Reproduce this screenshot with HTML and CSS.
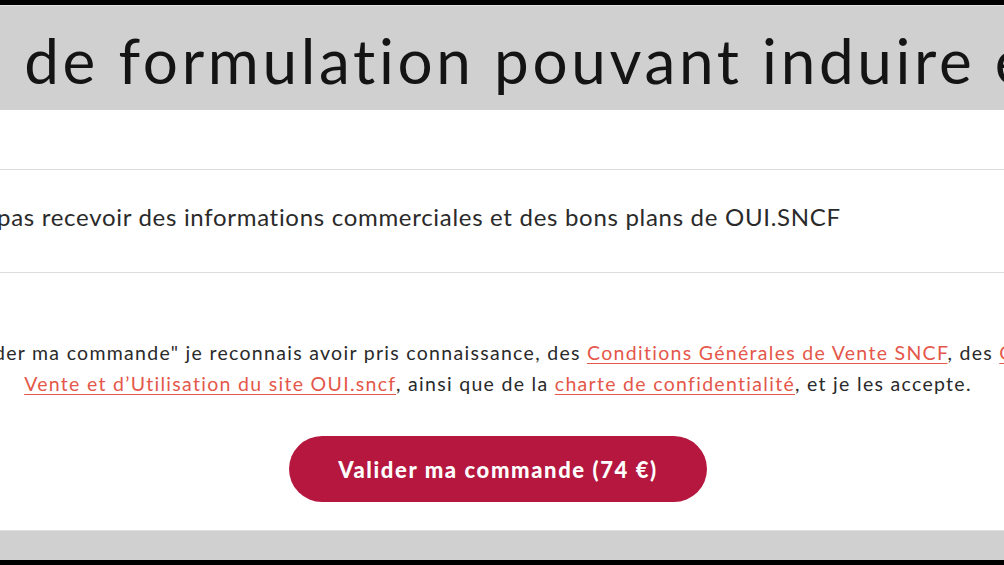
FILE: index.html
```html
<!DOCTYPE html>
<html lang="fr">
<head>
    <meta charset="UTF-8">
    <meta name="viewport" content="width=device-width, initial-scale=1.0">
    <title>OUI.sncf - Validation de la commande</title>
    <link rel="stylesheet" href="styles.css">
</head>
<body>
    <div class="page">
        <div class="banner">
            <h1 class="banner-title">Exemple de formulation pouvant induire en erreur</h1>
        </div>

        <div class="checkout">
            <div class="option-row">
                <label class="option-label">
                    Je ne souhaite pas recevoir des informations commerciales et des bons plans de OUI.SNCF
                </label>
            </div>

            <p class="legal">
                En cliquant sur "Valider ma commande" je reconnais avoir pris connaissance, des
                <a href="#">Conditions Générales de Vente SNCF</a>, des <a href="#">Conditions Générales de<br>Vente et d’Utilisation du site OUI.sncf</a>,
                ainsi que de la <a href="#">charte de confidentialité</a>, et je les accepte.
            </p>

            <div class="actions">
                <button class="submit-button">Valider ma commande (74 €)</button>
            </div>
        </div>

        <div class="banner-bottom"></div>
    </div>
</body>
</html>
```

FILE: styles.css
```css
* {
    margin: 0;
    padding: 0;
    box-sizing: border-box;
}

html,
body {
    height: 100%;
}

body {
    background-color: #000;
    font-family: Lato, "Open Sans", Arial, sans-serif;
    color: #2a2a2a;
    overflow: hidden;
    padding: 5px 0;
}

/* page is wider than the window, centred a little left of it */
.page {
    width: 1400px;
    margin-left: -202px;
    height: 100%;
    display: flex;
    flex-direction: column;
}

.banner {
    background-color: #d0d0d0;
    border-top: 1px solid #e2e2e2;
    height: 105px;
    padding-top: 25px;
    overflow: hidden;
}

.banner-title {
    margin-left: -50px;
    font-weight: 400;
    font-size: 62px;
    line-height: 58px;
    letter-spacing: 3.65px;
    color: #141414;
    white-space: nowrap;
}

.checkout {
    background-color: #fff;
    flex: 1;
    padding-top: 59px;
}

.option-row {
    border-top: 1px solid #dcdcdc;
    border-bottom: 1px solid #dcdcdc;
    padding: 34px 0 42px 0;
}

.option-label {
    display: block;
    font-size: 24px;
    line-height: 26px;
    letter-spacing: 0.7px;
    padding-left: 32px;
    white-space: nowrap;
}

.legal {
    margin-top: 64px;
    text-align: center;
    font-size: 19.5px;
    line-height: 31px;
    letter-spacing: 1.3px;
    white-space: nowrap;
}

.legal a {
    color: #e4574a;
    text-decoration: underline;
    text-underline-offset: 3px;
}

.actions {
    display: flex;
    justify-content: center;
    margin-top: 37px;
}

.submit-button {
    width: 418px;
    height: 66px;
    border: none;
    border-radius: 33px;
    background-color: #b5173f;
    color: #fff;
    font-family: Lato, Arial, sans-serif;
    font-weight: 900;
    font-size: 22px;
    letter-spacing: 1.6px;
    cursor: pointer;
}

.banner-bottom {
    background-color: #d0d0d0;
    border-top: 1px solid #e0e0e0;
    height: 30px;
}
```
